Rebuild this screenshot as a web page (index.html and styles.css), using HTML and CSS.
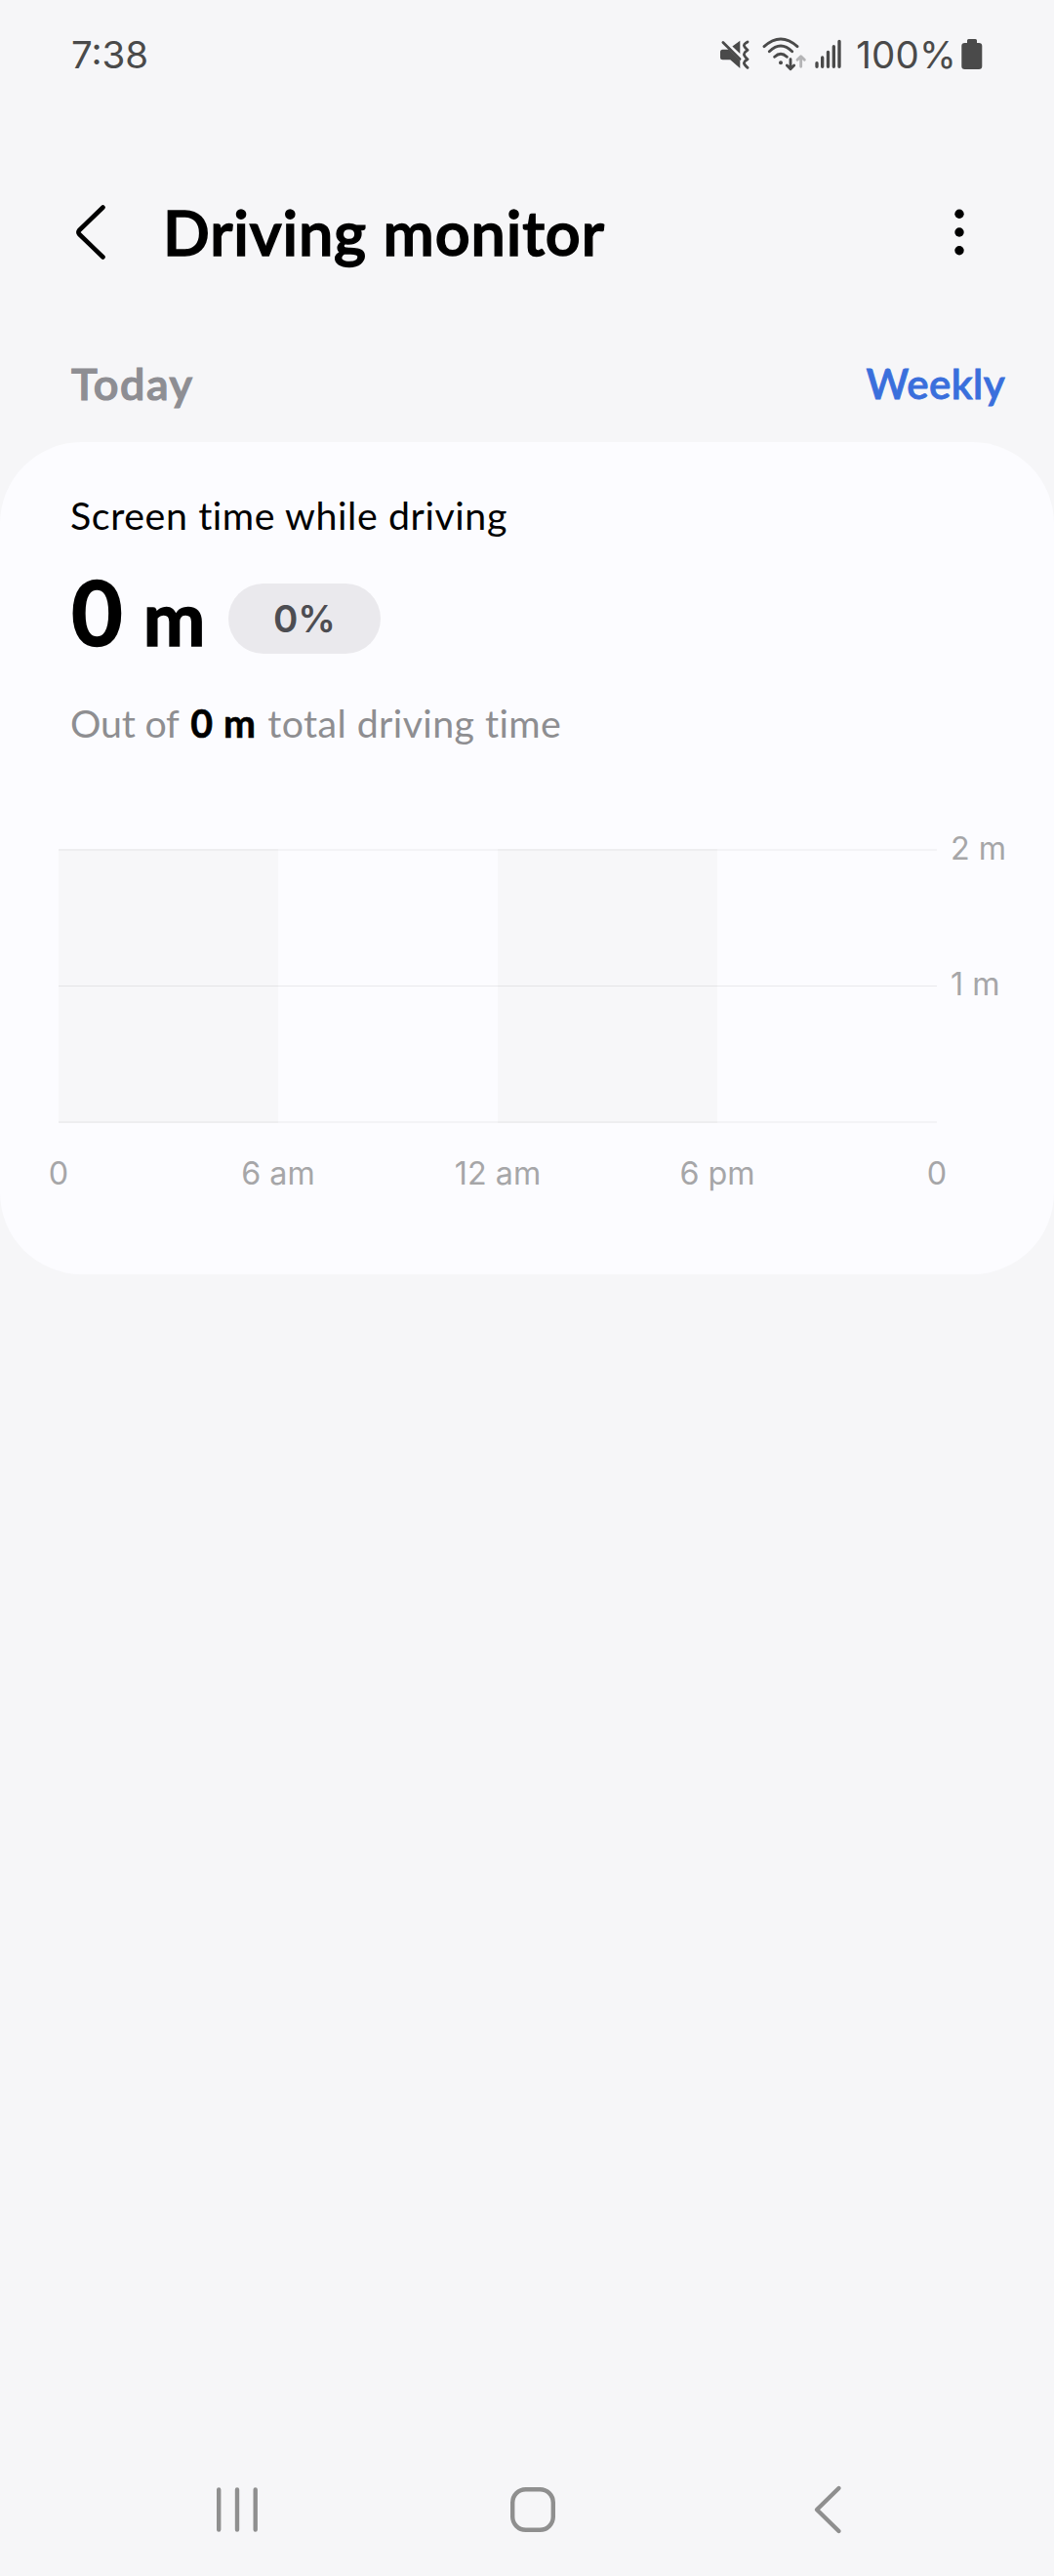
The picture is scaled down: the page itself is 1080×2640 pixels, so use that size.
FILE: index.html
```html
<!DOCTYPE html>
<html lang="en">
<head>
<meta charset="utf-8">
<title>Driving monitor</title>
<link rel="stylesheet" href="styles.css">
</head>
<body>
<div class="status">
  <span class="clock">7:38</span>
  <div class="status-icons">
    <svg class="mute" width="32" height="40" viewBox="0 0 32 40">
      <path d="M4.5 14.7H10.6L22.3 26.2V34L12.3 25.3H4.5Q2 25.3 2 22.8V17.2Q2 14.7 4.5 14.7ZM14.4 11.4L22.3 5.8V19Z" fill="#4a4a4a"/>
      <path d="M4.900 7.600L22 24.400" class="stroke"/>
      <path d="M30 6.900Q26 9 26.400 10.700T30 15.300Q26 18 26.400 20T30 24.700Q26 27 26.400 28.900T30 33.300" class="stroke"/>
    </svg>
    <svg class="wifi" width="50" height="44" viewBox="0 0 150 132">
      <path d="M9 41Q60 -5 111 41M25 56Q60 22 95 56M41 73Q60 55 79 73" class="arc"/>
      <circle cx="60" cy="91" r="6" fill="#4a4a4a"/>
      <path d="M90 80V109M79 99L90 110L101 99" class="arc"/>
      <path d="M122 103V72M111 82L122 71L133 82" class="arc faint"/>
    </svg>
    <svg class="signal" width="40" height="44" viewBox="0 0 120 132">
      <path d="M21 92V103M38 75V103M55.500 58V103M73 41V103M90 25V103" class="bars"/>
    </svg>
    <span class="percent">100%</span>
    <svg class="battery" width="22" height="32" viewBox="0 0 22 32">
      <path d="M6 4V1.500Q6 0 7.500 0H14.500Q16 0 16 1.500V4H18Q21.300 4 21.300 7V28Q21.300 31 18 31H3.600Q.300 31 .300 28V7Q.300 4 3.600 4Z" fill="#4a4a4a"/>
    </svg>
  </div>
</div>

<header class="header">
  <svg class="back" width="40" height="64" viewBox="0 0 40 64">
    <path d="M32.500 6.500L8.200 30Q6.600 32 8.200 34L32.500 57.500" fill="none"/>
  </svg>
  <h1>Driving monitor</h1>
  <svg class="more" width="12" height="50" viewBox="0 0 12 50">
    <circle cx="6" cy="6.300" r="4.700"/><circle cx="6" cy="25" r="4.700"/><circle cx="6" cy="43.700" r="4.700"/>
  </svg>
</header>

<div class="tabs">
  <span class="today">Today</span>
  <span class="weekly">Weekly</span>
</div>

<main class="card">
  <h2>Screen time while driving</h2>
  <div class="summary">
    <div class="value">0<span class="unit">m</span></div>
    <div class="pill">0%</div>
  </div>
  <p class="total"><span class="out">Out of</span> <b>0 m</b> <span>total driving time</span></p>
  <div class="chart">
    <div class="plot">
      <div class="bands"><i></i><i></i><i></i><i></i></div>
      <div class="lines"><i></i><i></i><i></i></div>
    </div>
    <div class="y-axis"><span>2 m</span><span>1 m</span></div>
    <div class="x-axis"><span>0</span><span>6 am</span><span>12 am</span><span>6 pm</span><span>0</span></div>
  </div>
</main>

<nav class="nav">
  <svg width="48" height="56" viewBox="0 0 48 56"><path d="M5.200 7.500V48.500M24 7.500V48.500M42.700 7.500V48.500"/></svg>
  <svg width="48" height="56" viewBox="0 0 48 56"><rect x="3.200" y="7.200" width="41.600" height="41.600" rx="13.500"/></svg>
  <svg width="48" height="56" viewBox="0 0 48 56"><path d="M35.500 6L13 28L35.500 50"/></svg>
</nav>
</body>
</html>
```
FILE: styles.css
```css
* { box-sizing: border-box; margin: 0; padding: 0; }

body {
  width: 1080px;
  height: 2640px;
  display: flex;
  flex-direction: column;
  background: #f6f6f8;
  color: #000;
  font-family: Lato, "Liberation Sans", sans-serif;
  font-variant-ligatures: none;
  white-space: nowrap;
  overflow: hidden;
}

svg { display: block; flex: none; }

/* Status bar */
.status {
  height: 112px;
  padding: 0 73px 0 73px;
  display: flex;
  align-items: center;
  justify-content: space-between;
  color: #4a4a4a;
  font: 400 38.5px/48px Inter, sans-serif;
}
.status-icons { display: flex; align-items: center; }
.mute { margin-right: 12px; }
.signal { margin-right: 7px; }
.percent { letter-spacing: .2px; margin-right: 5px; }
.stroke, .arc, .bars { fill: none; stroke: #4a4a4a; stroke-width: 2.8; stroke-linecap: round; stroke-linejoin: round; }
.arc { stroke-width: 8.5; }
.faint { stroke: #b4b4b6; }
.bars { stroke-width: 10; }

/* Title bar */
.header {
  height: 172px;
  margin-top: 40px;
  padding: 0 91px 0 73px;
  display: flex;
  align-items: center;
}
.back path { stroke: #000; stroke-width: 4.6; stroke-linecap: round; stroke-linejoin: round; }
h1 {
  flex: 1;
  margin-left: 54px;
  padding-bottom: 1px;
  font-size: 63px;
  font-weight: 600;
  line-height: 76px;
  letter-spacing: .85px;
  -webkit-text-stroke: 1.5px #000;
}

.tabs {
  height: 129px;
  padding: 9px 50px 0 73px;
  display: flex;
  align-items: center;
  justify-content: space-between;
  font-weight: 600;
}
.today { font-size: 45px; letter-spacing: 1.5px; color: #8e8e93; -webkit-text-stroke: 1.2px #8e8e93; }
.weekly { font-size: 42px; letter-spacing: .4px; color: #3a6fdc; -webkit-text-stroke: .8px #3a6fdc; }

/* Summary card */
.card {
  height: 853px;
  padding: 51px 0 0 73px;
  border-radius: 84px;
  background: #fcfcff;
}
h2 { margin-left: -1px; font-size: 39.3px; font-weight: 400; line-height: 48px; letter-spacing: .6px; }
.summary { display: flex; align-items: flex-start; margin-top: 46px; height: 72px; }
.value { width: 161px; font-size: 91px; font-weight: 700; line-height: 58px; -webkit-text-stroke: 1.5px #000; }
.unit { font-size: 76px; margin-left: 21px; }
.pill {
  width: 156px;
  height: 72px;
  border-radius: 36px;
  background: #eae9ed;
  color: #4d4d52;
  font: 600 38.5px/72px Inter, sans-serif;
  text-align: center;
}
.total { margin: 47px 0 0 -1px; font-size: 39.3px; line-height: 48px; letter-spacing: .42px; color: #8e8e91; }
.total .out { letter-spacing: -.2px; }
.total b { margin: 0 1px; letter-spacing: .8px; color: #000; -webkit-text-stroke: .6px #000; }

/* Hourly chart */
.chart {
  width: 1007px;
  margin: 105px 0 0 -13px;
  display: grid;
  grid-template-columns: 900px 1fr;
  grid-template-rows: 281px auto;
  color: #a6a6a8;
  font: 400 32.3px/40px Inter, sans-serif;
}
.plot, .bands { display: grid; }
.bands { grid-template-columns: repeat(4, 1fr); }
.bands, .lines { grid-area: 1 / 1; }
.bands i:nth-child(odd) { background: #f7f7f9; }
.lines { display: flex; flex-direction: column; justify-content: space-between; }
.lines i { height: 2px; background: rgba(0, 0, 0, .035); }
.lines i:nth-child(2) { height: 1px; background: rgba(0, 0, 0, .075); }
.y-axis { height: 139px; margin: 0 0 0 14px; display: flex; flex-direction: column; justify-content: space-between; }
.y-axis span { height: 0; display: flex; align-items: center; white-space: pre; }
.x-axis { margin-top: 32px; display: flex; justify-content: space-between; }
.x-axis span { width: 0; display: flex; justify-content: center; }

/* System navigation */
.nav {
  height: 136px;
  margin-top: auto;
  padding: 0 208px 0 219px;
  display: flex;
  align-items: center;
  justify-content: space-between;
}
.nav svg { fill: none; stroke: #8f8f8f; stroke-width: 4.4; stroke-linecap: round; stroke-linejoin: round; }
```
